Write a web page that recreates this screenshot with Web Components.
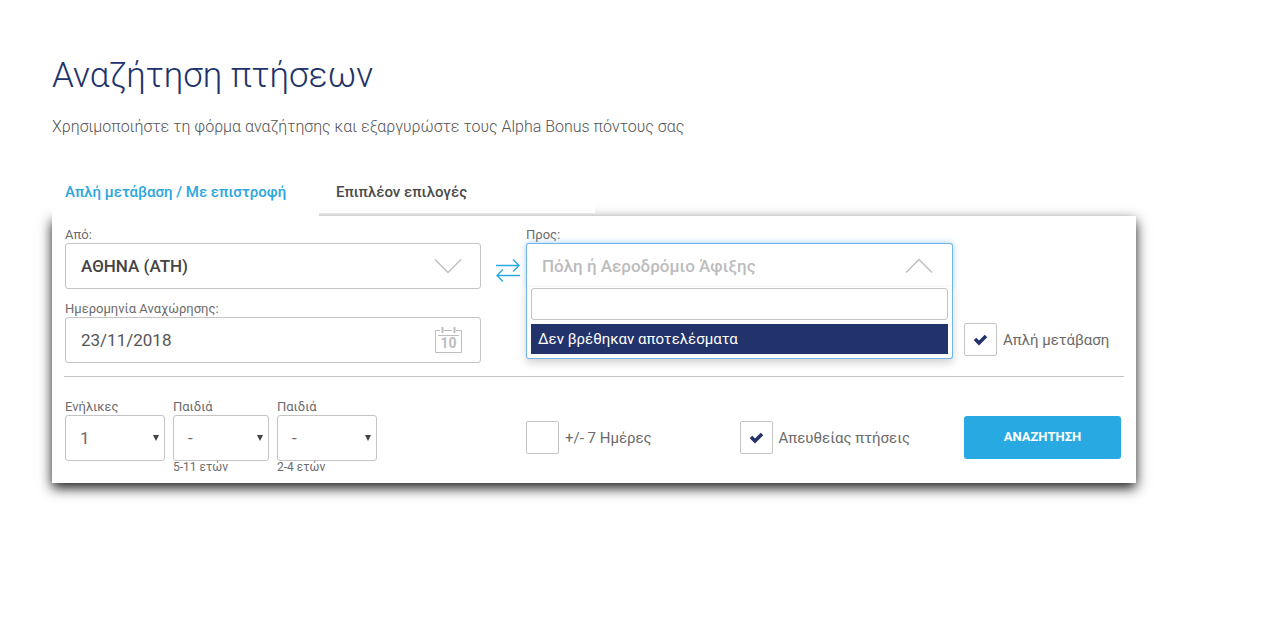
<!DOCTYPE html>
<html lang="el">
<head>
<meta charset="utf-8">
<title>Αναζήτηση πτήσεων</title>
<style>
body { margin: 0; background: #fff; font-family: Roboto, "Noto Sans", sans-serif; color: #6b6b6b; }
</style>
</head>
<body>
<flight-page></flight-page>
<script>
const define = (name, html, setup) => {
  const template = document.createElement('template');
  template.innerHTML = html;
  customElements.define(name, class extends HTMLElement {
    constructor() {
      super();
      this.attachShadow({ mode: 'open' }).append(template.content.cloneNode(true));
    }
    connectedCallback() { if (setup) setup(this, this.shadowRoot); }
  });
};

define('page-heading', `
<style>
:host { display: block; }
h1 { margin: 0; font-size: 35px; line-height: 48px; font-weight: 300; color: #22326a; }
p { margin: 15px 0 0; font-size: 16px; line-height: 24px; font-weight: 300; color: #555; }
</style>
<h1><slot name="title"></slot></h1>
<p><slot></slot></p>`);

define('search-tabs', `
<style>
:host { display: block; position: relative; z-index: 1; }
nav { display: grid; grid-template-columns: 267px 276px; align-items: start; }
a { box-sizing: border-box; background: #fff; text-decoration: none; color: #4a4a4a; font-size: 15px; line-height: 24px; font-weight: 500; height: 45px; padding: 12px 0 0 17px; }
a.active { height: 48px; padding-left: 13px; color: #2ba6de; }
</style>
<nav>
<a class="active" href="#simple" aria-current="page">Απλή μετάβαση / Με επιστροφή</a>
<a href="#more">Επιπλέον επιλογές</a>
</nav>`);

define('airport-select', `
<style>
:host { display: block; }
label { display: block; font-size: 13px; line-height: 16px; }
.box { display: grid; position: relative; }
select { grid-area: 1 / 1; appearance: none; box-sizing: border-box; width: 100%; height: 46px; padding: 0 60px 0 15px; border: 1px solid #c4c4c4; border-radius: 3px; background: #fff; font: 500 17px/24px Roboto, sans-serif; color: #444; outline: none; }
svg { grid-area: 1 / 1; place-self: center end; margin-right: 18px; pointer-events: none; }
</style>
<label for="from">Από:</label>
<div class="box">
<select id="from"><option>ΑΘΗΝΑ (ATH)</option></select>
<svg width="30" height="18" fill="none" stroke="#bdbdbd" stroke-width="1.400"><path d="M2 2.500 15 15.500 28 2.500"/></svg>
</div>`);

define('airport-combo', `
<style>
:host { display: block; }
label { display: block; font-size: 13px; line-height: 16px; }
.box { position: relative; }
button { display: flex; align-items: center; justify-content: space-between; box-sizing: border-box; width: 100%; height: 46px; padding: 0 18px 0 15px; border: 1px solid #72b5e8; border-bottom-color: transparent; border-radius: 3px 3px 0 0; background: #fff; box-shadow: 0 0 6px rgba(102,175,233,.6); font: 500 17px/24px Roboto, sans-serif; color: #bcbcbc; outline: none; }
.menu { position: absolute; top: 44px; left: 0; right: 0; box-sizing: border-box; border: 1px solid #72b5e8; border-top: 0; border-radius: 0 0 3px 3px; padding: 1px 4px 4px; background: #fff; box-shadow: 0 4px 8px rgba(0,0,0,.175); }
input { display: block; box-sizing: border-box; width: 100%; height: 32px; border: 1px solid #c4c4c4; border-radius: 3px; padding: 0 8px; font: 15px Roboto, sans-serif; outline: none; }
ul { list-style: none; margin: 4px 0 0; padding: 0; }
li { background: #22326a; color: #fff; font-size: 15px; line-height: 24px; padding: 3px 7px; }
</style>
<label for="to">Προς:</label>
<div class="box">
<button id="to" type="button" aria-expanded="true" aria-controls="menu"><span>Πόλη ή Αεροδρόμιο Άφιξης</span>
<svg width="30" height="18" fill="none" stroke="#bdbdbd" stroke-width="1.400"><path d="M2 15.500 15 2.500 28 15.500"/></svg></button>
<div class="menu" id="menu"><input type="search" aria-label="Αναζήτηση αεροδρομίου"><ul><li>Δεν βρέθηκαν αποτελέσματα</li></ul></div>
</div>`);

define('date-field', `
<style>
:host { display: block; }
label { display: block; font-size: 13px; line-height: 16px; }
.box { display: grid; }
input { grid-area: 1 / 1; box-sizing: border-box; width: 100%; height: 46px; padding: 0 60px 0 15px; border: 1px solid #c4c4c4; border-radius: 3px; font: 17px/24px Roboto, sans-serif; color: #555; outline: none; }
svg { grid-area: 1 / 1; place-self: center end; margin-right: 19px; pointer-events: none; }
text { font: 700 14px Roboto, sans-serif; }
</style>
<label for="date">Ημερομηνία Αναχώρησης:</label>
<div class="box">
<input id="date" value="23/11/2018">
<svg width="28" height="28" fill="none" stroke="#bdbdbd"><path d="M6 4.500H1.500V26.500H27.500V4.500H22M10 4.500H18M4 9.500H25"/><path d="M8.500 1V7M20.500 1V7" stroke-width="2"/><text x="14.500" y="22" text-anchor="middle" fill="#bdbdbd" stroke="none">10</text></svg>
</div>`);

define('swap-button', `
<style>
:host { display: block; }
button { display: block; border: 0; padding: 0; background: none; }
</style>
<button type="button" aria-label="Εναλλαγή"><svg width="26" height="26" viewBox="0 0 26 26" fill="none" stroke="#2ba9e2" stroke-width="1.400" style="display:block"><path d="M0 8.500H23M17 2.500 23 8.500 17 14.500M24 18.500H1M7 12.500 1 18.500 7 24.500"/></svg></button>`);

define('count-select', `
<style>
:host { display: block; }
label { display: block; font-size: 13px; line-height: 16px; }
.box { display: grid; }
select { grid-area: 1 / 1; appearance: none; box-sizing: border-box; width: 100%; height: 46px; padding: 0 20px 0 14px; border: 1px solid #c4c4c4; border-radius: 3px; background: #fff; font: 17px/24px Roboto, sans-serif; color: #6b6b6b; }
svg { grid-area: 1 / 1; place-self: center end; margin-right: 6px; pointer-events: none; }
small { display: block; font-size: 12px; line-height: 13px; }
</style>
<label for="count"></label>
<div class="box"><select id="count"><option></option></select><svg width="6" height="8"><path d="M0 1H6L3 7Z" fill="#444"/></svg></div>
<small></small>`, (host, root) => {
  root.querySelector('label').textContent = host.getAttribute('label');
  root.querySelector('option').textContent = host.getAttribute('value');
  root.querySelector('small').textContent = host.getAttribute('hint') || '';
});

define('check-option', `
<style>
:host { display: block; }
label { display: flex; align-items: center; gap: 6px; font-size: 15px; line-height: 24px; white-space: nowrap; }
.tick { display: grid; flex: none; }
input { grid-area: 1 / 1; appearance: none; box-sizing: border-box; margin: 0; width: 33px; height: 33px; border: 1px solid #c4c4c4; border-radius: 2px; background: #fff; }
svg { grid-area: 1 / 1; place-self: center; visibility: hidden; pointer-events: none; }
input:checked + svg { visibility: visible; }
</style>
<label><span class="tick"><input type="checkbox"><svg width="15" height="13"><path d="M2 6 6 10 13 3" fill="none" stroke="#22326a" stroke-width="3.500"/></svg></span><slot></slot></label>`,
(host, root) => { root.querySelector('input').checked = host.hasAttribute('checked'); });

define('search-button', `
<style>
:host { display: block; }
button { display: block; width: 100%; height: 43px; padding: 0 0 2px; border: 0; border-radius: 3px; background: #29a9e1; color: #fff; font: 700 13px/20px Roboto, sans-serif; }
</style>
<button type="submit"><slot></slot></button>`);

define('search-form', `
<style>
:host { display: block; background: #fff; box-shadow: 0 5px 12px rgba(0,0,0,.9); padding: 11px 12px 9px; }
form { margin: 0; }
.row { display: grid; grid-template-columns: 416fr 45px 427fr 171fr; padding-left: 1px; row-gap: 12px; }
swap-button { align-self: end; margin: 0 0 6px 15px; }
.side { margin-left: 11px; }
.trip { grid-column: 4; align-self: end; margin-bottom: 7px; }
hr { margin: 13px 0 22px; border: 0; border-top: 1px solid #c4c4c4; }
.people { display: grid; grid-template-columns: 100px 96px 100px; gap: 8px; align-items: start; }
.checks { grid-column: 3; display: grid; grid-template-columns: 1fr 1fr; align-items: start; padding-top: 22px; }
search-button { margin: 17px 3px 0 11px; }
</style>
<form>
<div class="row">
<airport-select></airport-select><swap-button></swap-button><airport-combo></airport-combo><span></span>
<date-field></date-field><check-option class="side trip" checked>Απλή μετάβαση</check-option>
</div>
<hr>
<div class="row">
<div class="people">
<count-select label="Ενήλικες" value="1"></count-select>
<count-select label="Παιδιά" value="-" hint="5-11 ετών"></count-select>
<count-select label="Παιδιά" value="-" hint="2-4 ετών"></count-select>
</div>
<div class="checks"><check-option>+/- 7 Ημέρες</check-option><check-option checked>Απευθείας πτήσεις</check-option></div>
<search-button>ΑΝΑΖΗΤΗΣΗ</search-button>
</div>
</form>`);

define('flight-page', `
<style>
:host { display: block; padding: 52px 144px 48px 52px; }
search-tabs { margin-top: 29px; }
</style>
<page-heading><span slot="title">Αναζήτηση πτήσεων</span>Χρησιμοποιήστε τη φόρμα αναζήτησης και εξαργυρώστε τους Alpha Bonus πόντους σας</page-heading>
<search-tabs></search-tabs>
<search-form></search-form>`);
</script>
</body>
</html>
